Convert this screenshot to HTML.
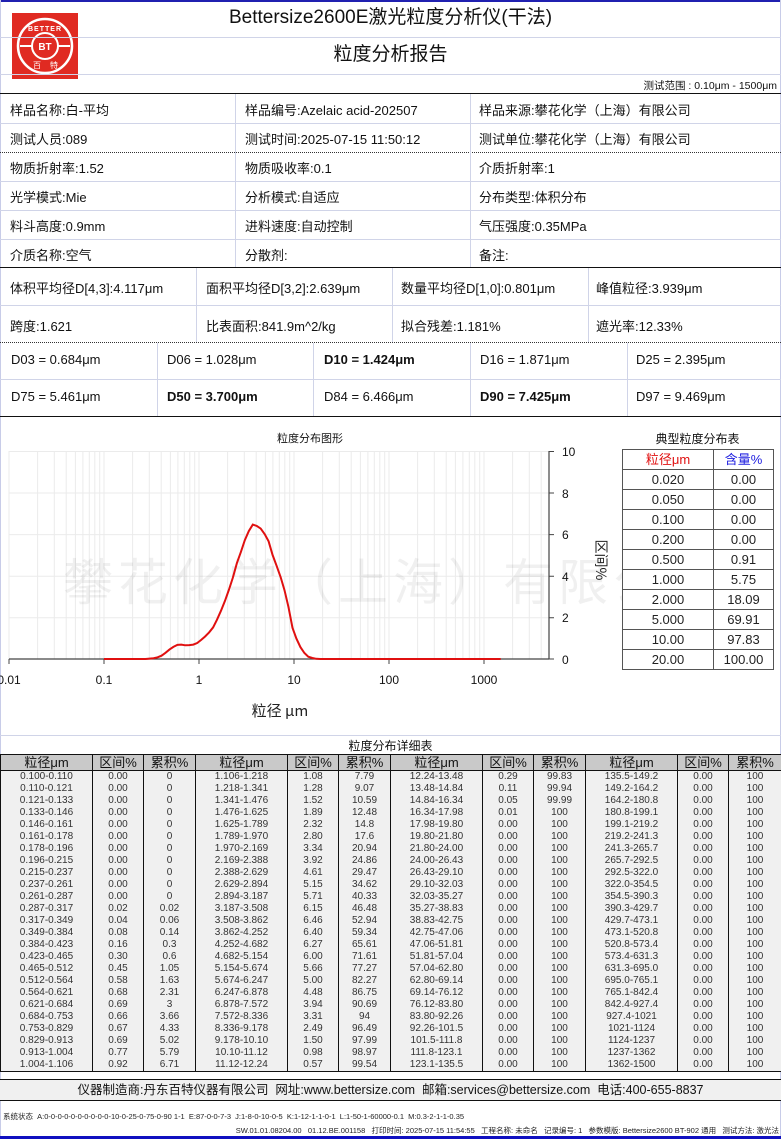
<!DOCTYPE html>
<html><head><meta charset="utf-8">
<style>
*{margin:0;padding:0;box-sizing:border-box}
body{width:781px;height:1139px;position:relative;background:#fff;font-family:"Liberation Sans","Noto Sans CJK SC",sans-serif;color:#111;overflow:hidden}
.a{position:absolute}
.hl{position:absolute;left:0;width:781px;height:1px;background:#d0d4e8}
.vl{position:absolute;width:1px;background:#d0d4e8}
.t13{font-size:13px;white-space:nowrap}
.dt{position:absolute;left:0;top:754px;width:781px;border-collapse:collapse;table-layout:fixed;font-size:10px;color:#333}
.dt th{background:#c9c9c9;font-weight:normal;font-size:13px;height:16px;line-height:15px;border:1px solid #111;color:#111;font-family:"Liberation Sans","Noto Sans CJK SC",sans-serif}
.dt td{height:12px;line-height:12px;text-align:center;border-left:1px solid #111;border-right:1px solid #111;background:#f0f0f0;padding:0}
.dt tr:last-child td{border-bottom:1px solid #111}
.tp{position:absolute;left:622px;top:449px;border-collapse:collapse;font-size:13px;color:#222;background:#fff}
.tp td{border:1px solid #555;width:91px;height:20px;text-align:center;line-height:19px}
.tp td+td{width:60px}
</style></head><body>
<div class="a" style="left:0;top:0;width:781px;height:2px;background:#2020b0"></div>
<div class="a" style="left:0;top:0;width:1px;height:1139px;background:#c8cce8"></div>
<div class="a" style="right:0;top:0;width:1px;height:1139px;background:#c8cce8"></div>
<!-- logo -->
<div class="a" style="left:12px;top:13px;width:66px;height:66px;background:#e02a22">
<svg width="66" height="66" viewBox="0 0 66 66"><circle cx="33" cy="33" r="27" fill="none" stroke="#fff" stroke-width="2.5"/><circle cx="33" cy="33" r="13" fill="none" stroke="#fff" stroke-width="2"/><path d="M8 33 H20 M46 33 H58" stroke="#fff" stroke-width="2"/>
<text x="33" y="37" fill="#fff" font-size="10" font-weight="bold" text-anchor="middle" font-family="Liberation Sans">BT</text>
<text x="33" y="18" fill="#fff" font-size="7" font-weight="bold" text-anchor="middle" font-family="Liberation Sans" letter-spacing="1">BETTER</text>
<text x="21" y="55" fill="#fff" font-size="8" font-family="Noto Sans CJK SC">百</text><text x="38" y="55" fill="#fff" font-size="8" font-family="Noto Sans CJK SC">特</text></svg></div>
<div class="a" style="left:0;top:6px;width:781px;text-align:center;font-size:19px;line-height:24px">Bettersize2600E激光粒度分析仪(干法)</div>
<div class="hl" style="top:37px"></div>
<div class="a" style="left:0;top:43px;width:781px;text-align:center;font-size:19px;line-height:24px">粒度分析报告</div>
<div class="hl" style="top:74px"></div>
<div class="a" style="right:4px;top:78px;font-size:10.5px">测试范围 : 0.10μm - 1500μm</div>
<div class="a" style="left:0;top:93px;width:781px;height:1px;background:#111"></div>
<!-- info rows -->
<div class="hl" style="top:123px"></div>
<div class="a" style="left:0;top:152px;width:781px;border-top:1px dotted #333"></div>
<div class="hl" style="top:181px"></div><div class="hl" style="top:210px"></div><div class="hl" style="top:239px"></div>
<div class="vl" style="left:235px;top:94px;height:174px"></div><div class="vl" style="left:470px;top:94px;height:174px"></div>
<div class="a t13" style="left:10px;top:100px">样品名称:白-平均</div><div class="a t13" style="left:245px;top:100px">样品编号:Azelaic acid-202507</div><div class="a t13" style="left:479px;top:100px">样品来源:攀花化学（上海）有限公司</div>
<div class="a t13" style="left:10px;top:129px">测试人员:089</div><div class="a t13" style="left:245px;top:129px">测试时间:2025-07-15 11:50:12</div><div class="a t13" style="left:479px;top:129px">测试单位:攀花化学（上海）有限公司</div>
<div class="a t13" style="left:10px;top:158px">物质折射率:1.52</div><div class="a t13" style="left:245px;top:158px">物质吸收率:0.1</div><div class="a t13" style="left:479px;top:158px">介质折射率:1</div>
<div class="a t13" style="left:10px;top:187px">光学模式:Mie</div><div class="a t13" style="left:245px;top:187px">分析模式:自适应</div><div class="a t13" style="left:479px;top:187px">分布类型:体积分布</div>
<div class="a t13" style="left:10px;top:216px">料斗高度:0.9mm</div><div class="a t13" style="left:245px;top:216px">进料速度:自动控制</div><div class="a t13" style="left:479px;top:216px">气压强度:0.35MPa</div>
<div class="a t13" style="left:10px;top:245px">介质名称:空气</div><div class="a t13" style="left:245px;top:245px">分散剂:</div><div class="a t13" style="left:479px;top:245px">备注:</div>
<div class="a" style="left:0;top:267px;width:781px;height:1px;background:#111"></div>
<!-- stats -->
<div class="hl" style="top:305px"></div>
<div class="a" style="left:0;top:342px;width:781px;border-top:1px dotted #333"></div>
<div class="vl" style="left:196px;top:268px;height:74px"></div><div class="vl" style="left:392px;top:268px;height:74px"></div><div class="vl" style="left:588px;top:268px;height:74px"></div>
<div class="a t13" style="left:10px;top:278px">体积平均径D[4,3]:4.117μm</div><div class="a t13" style="left:206px;top:278px">面积平均径D[3,2]:2.639μm</div><div class="a t13" style="left:401px;top:278px">数量平均径D[1,0]:0.801μm</div><div class="a t13" style="left:596px;top:278px">峰值粒径:3.939μm</div>
<div class="a t13" style="left:10px;top:316px">跨度:1.621</div><div class="a t13" style="left:206px;top:316px">比表面积:841.9m^2/kg</div><div class="a t13" style="left:401px;top:316px">拟合残差:1.181%</div><div class="a t13" style="left:596px;top:316px">遮光率:12.33%</div>
<div class="hl" style="top:379px"></div>
<div class="vl" style="left:157px;top:343px;height:73px"></div><div class="vl" style="left:313px;top:343px;height:73px"></div><div class="vl" style="left:470px;top:343px;height:73px"></div><div class="vl" style="left:627px;top:343px;height:73px"></div>
<div class="a t13" style="left:11px;top:352px">D03 = 0.684μm</div><div class="a t13" style="left:167px;top:352px">D06 = 1.028μm</div><div class="a t13" style="left:324px;top:352px;font-weight:bold">D10 = 1.424μm</div><div class="a t13" style="left:480px;top:352px">D16 = 1.871μm</div><div class="a t13" style="left:636px;top:352px">D25 = 2.395μm</div>
<div class="a t13" style="left:11px;top:389px">D75 = 5.461μm</div><div class="a t13" style="left:167px;top:389px;font-weight:bold">D50 = 3.700μm</div><div class="a t13" style="left:324px;top:389px">D84 = 6.466μm</div><div class="a t13" style="left:480px;top:389px;font-weight:bold">D90 = 7.425μm</div><div class="a t13" style="left:636px;top:389px">D97 = 9.469μm</div>
<div class="a" style="left:0;top:416px;width:781px;height:1px;background:#111"></div>
<!-- chart -->
<div class="a" style="left:0;top:430px;width:620px;text-align:center;font-size:11px">粒度分布图形</div>
<svg class="a" style="left:0;top:440px" width="781" height="290" viewBox="0 440 781 290">
<g stroke="#ebebeb" stroke-width="1">
<path d="M9 451V659M37.6 451V659M54.3 451V659M66.2 451V659M75.4 451V659M82.9 451V659M89.3 451V659M94.8 451V659M99.7 451V659M104 451V659M132.6 451V659M149.3 451V659M161.2 451V659M170.4 451V659M177.9 451V659M184.3 451V659M189.8 451V659M194.7 451V659M199 451V659M227.6 451V659M244.3 451V659M256.2 451V659M265.4 451V659M272.9 451V659M279.3 451V659M284.8 451V659M289.7 451V659M294 451V659M322.6 451V659M339.3 451V659M351.2 451V659M360.4 451V659M367.9 451V659M374.3 451V659M379.8 451V659M384.7 451V659M389 451V659M417.6 451V659M434.3 451V659M446.2 451V659M455.4 451V659M462.9 451V659M469.3 451V659M474.8 451V659M479.7 451V659M484 451V659M512.6 451V659M529.3 451V659M541.2 451V659"/>
<path d="M9 451.5H549M9 493H549M9 534.6H549M9 576.2H549M9 617.8H549"/>
</g>
<text x="63" y="600" fill="#000" fill-opacity="0.06" font-size="50" letter-spacing="5" font-family="Noto Sans CJK SC">攀花化学（上海）有限公司</text>
<path d="M9 659H549M549 451V659" stroke="#444" stroke-width="1.2" fill="none"/>
<path d="M9 659v5M104 659v5M199 659v5M294 659v5M389 659v5M484 659v5M549 451.5h5M549 493h5M549 534.6h5M549 576.2h5M549 617.8h5M549 659h5" stroke="#444"/>
<g font-size="12" font-family="Liberation Sans" fill="#111">
<text x="562" y="456">10</text><text x="562" y="498">8</text><text x="562" y="539">6</text><text x="562" y="581">4</text><text x="562" y="622">2</text><text x="562" y="664">0</text>
<text x="9" y="684" text-anchor="middle">0.01</text><text x="104" y="684" text-anchor="middle">0.1</text><text x="199" y="684" text-anchor="middle">1</text><text x="294" y="684" text-anchor="middle">10</text><text x="389" y="684" text-anchor="middle">100</text><text x="484" y="684" text-anchor="middle">1000</text>
</g>
<text x="280" y="716" font-size="15" text-anchor="middle" font-family="Noto Sans CJK SC" fill="#222">粒径 μm</text>
<text transform="translate(596,560) rotate(90)" font-size="14" text-anchor="middle" font-family="Noto Sans CJK SC" fill="#222">区间%</text>
<polyline fill="none" stroke="#e01010" stroke-width="2" points="104,659 145.5,659 149.5,658.6 153.6,658.2 157.6,657.3 161.5,655.7 165.5,652.8 169.4,649.6 173.4,646.9 177.4,644.9 181.3,644.6 185.3,645.3 189.3,645.1 193.3,644.6 197.2,643 201.2,639.9 205.1,636.5 209.1,632.4 213.1,627.4 217,619.7 221,610.7 225,600.8 229,589.5 232.9,577.5 236.9,563.1 240.9,551.9 244.8,540.2 248.8,531.1 252.8,524.6 256.7,525.9 260.7,528.6 264.7,534.2 268.6,541.3 272.6,555 276.6,565.8 280.6,577 284.5,590.2 288.5,607.2 292.5,627.8 296.4,638.6 300.4,647.1 304.4,653 308.3,656.7 312.3,658 316.3,658.8 320.3,659 500.7,659"/>
</svg>
<!-- typical table -->
<div class="a" style="left:622px;top:430px;width:151px;text-align:center;font-size:12px">典型粒度分布表</div>
<table class="tp">
<tr><td style="color:#e01010">粒径μm</td><td style="color:#2020e0">含量%</td></tr>
<tr><td>0.020</td><td>0.00</td></tr><tr><td>0.050</td><td>0.00</td></tr><tr><td>0.100</td><td>0.00</td></tr><tr><td>0.200</td><td>0.00</td></tr><tr><td>0.500</td><td>0.91</td></tr><tr><td>1.000</td><td>5.75</td></tr><tr><td>2.000</td><td>18.09</td></tr><tr><td>5.000</td><td>69.91</td></tr><tr><td>10.00</td><td>97.83</td></tr><tr><td>20.00</td><td>100.00</td></tr>
</table>
<div class="hl" style="top:735px"></div>
<div class="a" style="left:0;top:737px;width:781px;text-align:center;font-size:12px">粒度分布详细表</div>
<table class="dt">
<colgroup><col style="width:92px"><col style="width:51px"><col style="width:52px"><col style="width:92px"><col style="width:51px"><col style="width:52px"><col style="width:92px"><col style="width:51px"><col style="width:52px"><col style="width:92px"><col style="width:51px"><col style="width:53px"></colgroup>
<tr><th>粒径μm</th><th>区间%</th><th>累积%</th><th>粒径μm</th><th>区间%</th><th>累积%</th><th>粒径μm</th><th>区间%</th><th>累积%</th><th>粒径μm</th><th>区间%</th><th>累积%</th></tr>
<tr><td>0.100-0.110</td><td>0.00</td><td>0</td><td>1.106-1.218</td><td>1.08</td><td>7.79</td><td>12.24-13.48</td><td>0.29</td><td>99.83</td><td>135.5-149.2</td><td>0.00</td><td>100</td></tr>
<tr><td>0.110-0.121</td><td>0.00</td><td>0</td><td>1.218-1.341</td><td>1.28</td><td>9.07</td><td>13.48-14.84</td><td>0.11</td><td>99.94</td><td>149.2-164.2</td><td>0.00</td><td>100</td></tr>
<tr><td>0.121-0.133</td><td>0.00</td><td>0</td><td>1.341-1.476</td><td>1.52</td><td>10.59</td><td>14.84-16.34</td><td>0.05</td><td>99.99</td><td>164.2-180.8</td><td>0.00</td><td>100</td></tr>
<tr><td>0.133-0.146</td><td>0.00</td><td>0</td><td>1.476-1.625</td><td>1.89</td><td>12.48</td><td>16.34-17.98</td><td>0.01</td><td>100</td><td>180.8-199.1</td><td>0.00</td><td>100</td></tr>
<tr><td>0.146-0.161</td><td>0.00</td><td>0</td><td>1.625-1.789</td><td>2.32</td><td>14.8</td><td>17.98-19.80</td><td>0.00</td><td>100</td><td>199.1-219.2</td><td>0.00</td><td>100</td></tr>
<tr><td>0.161-0.178</td><td>0.00</td><td>0</td><td>1.789-1.970</td><td>2.80</td><td>17.6</td><td>19.80-21.80</td><td>0.00</td><td>100</td><td>219.2-241.3</td><td>0.00</td><td>100</td></tr>
<tr><td>0.178-0.196</td><td>0.00</td><td>0</td><td>1.970-2.169</td><td>3.34</td><td>20.94</td><td>21.80-24.00</td><td>0.00</td><td>100</td><td>241.3-265.7</td><td>0.00</td><td>100</td></tr>
<tr><td>0.196-0.215</td><td>0.00</td><td>0</td><td>2.169-2.388</td><td>3.92</td><td>24.86</td><td>24.00-26.43</td><td>0.00</td><td>100</td><td>265.7-292.5</td><td>0.00</td><td>100</td></tr>
<tr><td>0.215-0.237</td><td>0.00</td><td>0</td><td>2.388-2.629</td><td>4.61</td><td>29.47</td><td>26.43-29.10</td><td>0.00</td><td>100</td><td>292.5-322.0</td><td>0.00</td><td>100</td></tr>
<tr><td>0.237-0.261</td><td>0.00</td><td>0</td><td>2.629-2.894</td><td>5.15</td><td>34.62</td><td>29.10-32.03</td><td>0.00</td><td>100</td><td>322.0-354.5</td><td>0.00</td><td>100</td></tr>
<tr><td>0.261-0.287</td><td>0.00</td><td>0</td><td>2.894-3.187</td><td>5.71</td><td>40.33</td><td>32.03-35.27</td><td>0.00</td><td>100</td><td>354.5-390.3</td><td>0.00</td><td>100</td></tr>
<tr><td>0.287-0.317</td><td>0.02</td><td>0.02</td><td>3.187-3.508</td><td>6.15</td><td>46.48</td><td>35.27-38.83</td><td>0.00</td><td>100</td><td>390.3-429.7</td><td>0.00</td><td>100</td></tr>
<tr><td>0.317-0.349</td><td>0.04</td><td>0.06</td><td>3.508-3.862</td><td>6.46</td><td>52.94</td><td>38.83-42.75</td><td>0.00</td><td>100</td><td>429.7-473.1</td><td>0.00</td><td>100</td></tr>
<tr><td>0.349-0.384</td><td>0.08</td><td>0.14</td><td>3.862-4.252</td><td>6.40</td><td>59.34</td><td>42.75-47.06</td><td>0.00</td><td>100</td><td>473.1-520.8</td><td>0.00</td><td>100</td></tr>
<tr><td>0.384-0.423</td><td>0.16</td><td>0.3</td><td>4.252-4.682</td><td>6.27</td><td>65.61</td><td>47.06-51.81</td><td>0.00</td><td>100</td><td>520.8-573.4</td><td>0.00</td><td>100</td></tr>
<tr><td>0.423-0.465</td><td>0.30</td><td>0.6</td><td>4.682-5.154</td><td>6.00</td><td>71.61</td><td>51.81-57.04</td><td>0.00</td><td>100</td><td>573.4-631.3</td><td>0.00</td><td>100</td></tr>
<tr><td>0.465-0.512</td><td>0.45</td><td>1.05</td><td>5.154-5.674</td><td>5.66</td><td>77.27</td><td>57.04-62.80</td><td>0.00</td><td>100</td><td>631.3-695.0</td><td>0.00</td><td>100</td></tr>
<tr><td>0.512-0.564</td><td>0.58</td><td>1.63</td><td>5.674-6.247</td><td>5.00</td><td>82.27</td><td>62.80-69.14</td><td>0.00</td><td>100</td><td>695.0-765.1</td><td>0.00</td><td>100</td></tr>
<tr><td>0.564-0.621</td><td>0.68</td><td>2.31</td><td>6.247-6.878</td><td>4.48</td><td>86.75</td><td>69.14-76.12</td><td>0.00</td><td>100</td><td>765.1-842.4</td><td>0.00</td><td>100</td></tr>
<tr><td>0.621-0.684</td><td>0.69</td><td>3</td><td>6.878-7.572</td><td>3.94</td><td>90.69</td><td>76.12-83.80</td><td>0.00</td><td>100</td><td>842.4-927.4</td><td>0.00</td><td>100</td></tr>
<tr><td>0.684-0.753</td><td>0.66</td><td>3.66</td><td>7.572-8.336</td><td>3.31</td><td>94</td><td>83.80-92.26</td><td>0.00</td><td>100</td><td>927.4-1021</td><td>0.00</td><td>100</td></tr>
<tr><td>0.753-0.829</td><td>0.67</td><td>4.33</td><td>8.336-9.178</td><td>2.49</td><td>96.49</td><td>92.26-101.5</td><td>0.00</td><td>100</td><td>1021-1124</td><td>0.00</td><td>100</td></tr>
<tr><td>0.829-0.913</td><td>0.69</td><td>5.02</td><td>9.178-10.10</td><td>1.50</td><td>97.99</td><td>101.5-111.8</td><td>0.00</td><td>100</td><td>1124-1237</td><td>0.00</td><td>100</td></tr>
<tr><td>0.913-1.004</td><td>0.77</td><td>5.79</td><td>10.10-11.12</td><td>0.98</td><td>98.97</td><td>111.8-123.1</td><td>0.00</td><td>100</td><td>1237-1362</td><td>0.00</td><td>100</td></tr>
<tr><td>1.004-1.106</td><td>0.92</td><td>6.71</td><td>11.12-12.24</td><td>0.57</td><td>99.54</td><td>123.1-135.5</td><td>0.00</td><td>100</td><td>1362-1500</td><td>0.00</td><td>100</td></tr>
</table>
<!-- footer -->
<div class="a" style="left:0;top:1079px;width:781px;height:22px;background:#f0f0f0;border-top:1px solid #111;border-bottom:1px solid #111;text-align:center;font-size:12.5px;line-height:20px">仪器制造商:丹东百特仪器有限公司&nbsp;&nbsp;网址:www.bettersize.com&nbsp;&nbsp;邮箱:services@bettersize.com&nbsp;&nbsp;电话:400-655-8837</div>
<div class="a" style="left:3px;top:1111px;font-size:7.5px;white-space:nowrap;color:#222">系统状态&nbsp;&nbsp;A:0-0-0-0-0-0-0-0-0-0-10-0-25-0-75-0-90 1-1&nbsp;&nbsp;E:87-0-0-7-3&nbsp;&nbsp;J:1-8-0-10-0-5&nbsp;&nbsp;K:1-12-1-1-0-1&nbsp;&nbsp;L:1-50-1-60000-0.1&nbsp;&nbsp;M:0.3-2-1-1-0.35</div>
<div class="a" style="right:2px;top:1125px;font-size:7.5px;white-space:nowrap;color:#222">SW.01.01.08204.00&nbsp;&nbsp;&nbsp;01.12.BE.001158&nbsp;&nbsp;&nbsp;打印时间: 2025-07-15 11:54:55&nbsp;&nbsp;&nbsp;工程名称: 未命名&nbsp;&nbsp;&nbsp;记录编号: 1&nbsp;&nbsp;&nbsp;参数模版: Bettersize2600 BT-902 通用&nbsp;&nbsp;&nbsp;测试方法: 激光法</div>
<div class="a" style="left:0;top:1136px;width:781px;height:3px;background:#1010c0"></div>
</body></html>
